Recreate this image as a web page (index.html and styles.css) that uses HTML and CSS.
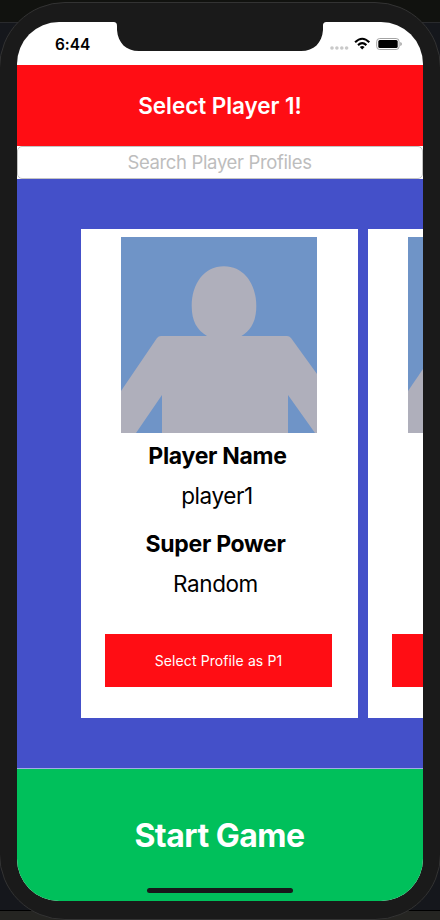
FILE: index.html
```
<!DOCTYPE html>
<html lang="en">
<head>
<meta charset="utf-8">
<title>Select Player</title>
<link rel="stylesheet" href="styles.css">
</head>
<body>
<div class="phone">
  <main class="screen">
    <header class="status">
      <span class="time">6:44</span>
      <svg class="notch" width="214" height="30" viewBox="0 0 214 30"><path d="M0 0C3 0 4 1 4 4V8C5 21 13 29 26 29H188C201 29 209 21 210 8V4C210 1 211 0 214 0Z" fill="#1a1a1a"/></svg>
      <svg class="indicators" width="74" height="16" viewBox="0 0 74 16">
        <g fill="#c9c9c9"><circle cx="2" cy="12" r="1.8"/><circle cx="6.9" cy="12" r="1.8"/><circle cx="11.8" cy="12" r="1.8"/><circle cx="16.6" cy="12" r="1.8"/></g>
        <g fill="none" stroke="#000" stroke-width="2.1"><path d="M25.1 6.2Q32.2-.7 39.3 6.2"/><path d="M28 9.1Q32.2 5.3 36.4 9.1"/></g>
        <path d="M29.8 11Q32.2 9.2 34.6 11L32.2 13.5Z"/>
        <rect x="46.7" y="2.5" width="22.4" height="11" rx="3" fill="none" stroke="#a3a3a3"/>
        <rect x="48.3" y="4" width="19.4" height="8" rx="1.5"/>
        <path d="M70.2 6Q72 6.5 72 8T70.2 10Z" fill="#aaa"/>
      </svg>
    </header>
    <h1 class="title"><span>Select Player 1!</span></h1>
    <input class="search" type="text" placeholder="Search Player Profiles" aria-label="Search Player Profiles">
    <section class="profiles">
      <article class="card">
        <svg class="avatar" viewBox="0 0 196 196"><path fill="#6f94c7" d="M0 0H196V196H0Z"/><g fill="#afafbb"><path d="M103 29.3C123 29.3 135.3 47 135.3 69C135.3 84 130 93 120.5 99H166Q168.5 99 170 101L196 137V196H194L167 158V196H41V158L15 196H0V154L36 101Q37.5 99 40 99H86C76 93 70.7 84 70.7 69C70.7 47 83 29.3 103 29.3Z"/></g></svg>
        <h2 class="label">Player Name</h2>
        <p class="value player">player1</p>
        <h2 class="label power">Super Power</h2>
        <p class="value random">Random</p>
        <button class="select">Select Profile as P1</button>
      </article>
      <article class="card">
        <svg class="avatar" viewBox="0 0 196 196"><path fill="#6f94c7" d="M0 0H196V196H0Z"/><path fill="#afafbb" d="M0 154L36 101Q37.5 99 40 99V196H0Z"/></svg>
        <button class="select next"></button>
      </article>
    </section>
    <button class="start"><span>Start Game</span></button>
    <div class="home"></div>
  </main>
</div>
</body>
</html>
```
FILE: styles.css
```
* { box-sizing: border-box; }
body { margin: 0; width: 440px; height: 920px; overflow: hidden; background: linear-gradient(#11120f 0 22px, #292a2d 22px 23px, #15171c 23px 910px, #000 910px 911px, #252522 911px); font-family: Inter, "Liberation Sans", sans-serif; }
h1, h2, p { margin: 0; }
button { border: 0; padding: 0; font-family: inherit; }
.phone { width: 442px; height: 918px; margin: 2px 0 0 -1px; padding: 19px 17px; border: 1px solid #333; border-radius: 66px; background: #1a1a1a; }
.screen { position: relative; width: 406px; height: 879px; overflow: hidden; border-radius: 42px; background: #fff; display: flex; flex-direction: column; }
.status { position: relative; height: 43px; flex: none; display: flex; justify-content: space-between; padding: 14px 19px 0 38px; }
.time { font-size: 15.5px; line-height: 17px; font-weight: 600; letter-spacing: -.1px; }
.notch { position: absolute; top: 0; left: 96px; }
.indicators { flex: none; }
.title { height: 81px; flex: none; background: #ff0d14; color: #fff; display: flex; justify-content: center; align-items: center; font-size: 22.5px; font-weight: 600; letter-spacing: -.05px; }
.search { width: 406px; height: 33px; flex: none; border: 1px solid #c3c3c3; border-radius: 5px; padding: 0 1px 2px 0; text-align: center; font: 18.5px Inter, sans-serif; letter-spacing: -.35px; background: #fff; outline: 0; }
.search::placeholder { color: #bdbdbd; opacity: 1; }
.profiles { height: 590px; flex: none; background: #4450c9; border-bottom: 1px solid #a4abe7; padding: 50px 0 0 64px; display: flex; gap: 10px; overflow: hidden; }
.card { width: 277px; height: 489px; flex: none; background: #fff; padding: 8px 25px 0; display: flex; flex-direction: column; align-items: center; }
.avatar { width: 196px; height: 196px; flex: none; margin-right: 1px; }
.label { font-size: 23px; line-height: 30px; font-weight: 700; letter-spacing: -.3px; margin: 8px 4px 0 0; white-space: nowrap; }
.value { font-size: 22.5px; line-height: 30px; letter-spacing: -.4px; margin: 10px 5px 0 0; }
.power { margin: 18px 8px 0 0; }
.random { margin-right: 8px; }
.select { width: 227px; height: 53px; flex: none; margin: 35px 2px 0 0; background: #ff0d14; color: #fff; font-size: 14px; letter-spacing: .1px; }
.select.next { margin-top: 201px; }
.start { flex: 1; background: #00c05b; color: #fff; font-size: 32px; font-weight: 700; letter-spacing: -.5px; padding-right: 1px; }
.home { position: absolute; left: 130px; bottom: 8px; width: 146px; height: 5px; border-radius: 3px; background: #17191a; }
```
